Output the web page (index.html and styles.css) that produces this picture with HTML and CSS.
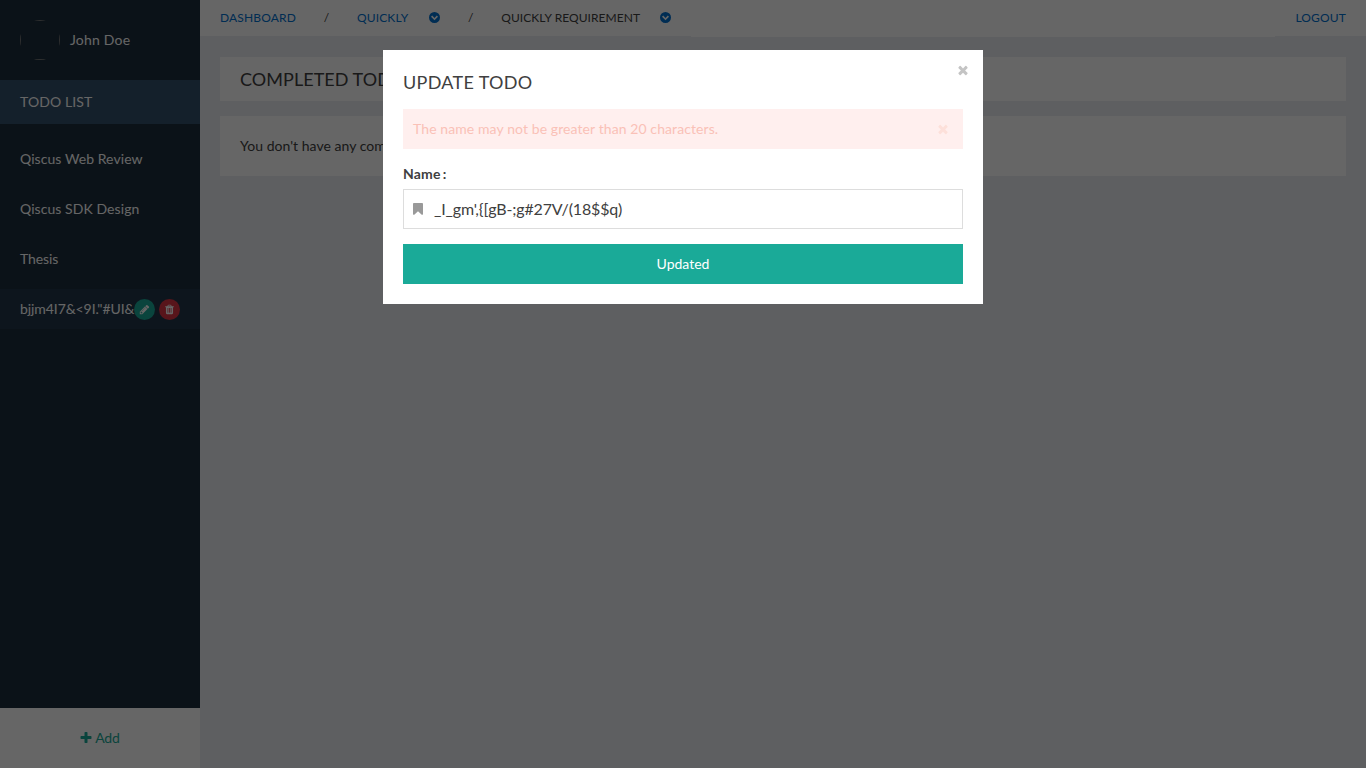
FILE: index.html
```html
<!DOCTYPE html>
<html lang="en">
<head>
<meta charset="utf-8">
<title>Todo</title>
<link rel="stylesheet" href="styles.css">
</head>
<body>
<svg class="sprite" aria-hidden="true">
  <symbol id="times" viewBox="0 0 1792 1792"><path d="M1490 1322q0 40-28 68l-136 136q-28 28-68 28t-68-28l-294-294-294 294q-28 28-68 28t-68-28l-136-136q-28-28-28-68t28-68l294-294-294-294q-28-28-28-68t28-68l136-136q28-28 68-28t68 28l294 294 294-294q28-28 68-28t68 28l136 136q28 28 28 68t-28 68l-294 294 294 294q28 28 28 68z"/></symbol>
  <symbol id="plus" viewBox="0 0 1792 1792"><path d="M1600 736v192q0 40-28 68t-68 28h-416v416q0 40-28 68t-68 28h-192q-40 0-68-28t-28-68v-416h-416q-40 0-68-28t-28-68v-192q0-40 28-68t68-28h416v-416q0-40 28-68t68-28h192q40 0 68 28t28 68v416h416q40 0 68 28t28 68z"/></symbol>
  <symbol id="bookmark" viewBox="0 0 1792 1792"><path d="M1420 128q23 0 44 9 33 13 52.500 41t19.500 62v1289q0 34-19.500 62t-52.500 41q-19 8-44 8-48 0-83-32l-441-424-441 424q-36 33-83 33-23 0-44-9-33-13-52.500-41t-19.500-62v-1289q0-34 19.500-62t52.500-41q21-9 44-9h1048z"/></symbol>
  <symbol id="pencil" viewBox="0 0 1792 1792"><path d="M491 1536l91-91-235-235-91 91v107h128v128h107zm523-928q0-22-22-22-10 0-17 7l-542 542q-7 7-7 17 0 22 22 22 10 0 17-7l542-542q7-7 7-17zm-54-192l416 416-832 832h-416v-416zm683 96q0 53-37 90l-166 166-416-416 166-165q36-38 90-38 53 0 91 38l235 234q37 39 37 91z"/></symbol>
  <symbol id="trash" viewBox="0 0 1792 1792"><path d="M704 1376v-704q0-14-9-23t-23-9h-64q-14 0-23 9t-9 23v704q0 14 9 23t23 9h64q14 0 23-9t9-23zm256 0v-704q0-14-9-23t-23-9h-64q-14 0-23 9t-9 23v704q0 14 9 23t23 9h64q14 0 23-9t9-23zm256 0v-704q0-14-9-23t-23-9h-64q-14 0-23 9t-9 23v704q0 14 9 23t23 9h64q14 0 23-9t9-23zm-544-992h448l-48-117q-7-9-17-11h-317q-10 2-17 11zm928 32v64q0 14-9 23t-23 9h-96v948q0 83-47 143.500t-113 60.500h-832q-66 0-113-58.500t-47-141.500v-952h-96q-14 0-23-9t-9-23v-64q0-14 9-23t23-9h309l70-167q15-37 54-63t79-26h320q40 0 79 26t54 63l70 167h309q14 0 23 9t9 23z"/></symbol>
  <symbol id="chevron" viewBox="0 0 11 11"><path fill-rule="evenodd" d="M5.500 0a5.500 5.500 0 1 0 0 11a5.500 5.500 0 1 0 0-11zM5.500 8.300L2 4.800L3.200 3.600L5.500 5.900L7.800 3.600L9 4.800z"/></symbol>
</svg>
<div class="app">
  <aside class="sidebar">
    <div class="user"><span class="avatar"></span><span class="username">John Doe</span></div>
    <div class="section">TODO LIST</div>
    <nav class="todos">
      <a class="todo">Qiscus Web Review</a>
      <a class="todo">Qiscus SDK Design</a>
      <a class="todo short">Thesis</a>
      <div class="todo active">
        <span class="name">bjjm4I7&amp;&lt;9I."#UI&amp;</span>
        <span class="round edit"><svg><use href="#pencil"/></svg></span>
        <span class="round delete"><svg><use href="#trash"/></svg></span>
      </div>
    </nav>
    <a class="add"><svg class="icon"><use href="#plus"/></svg><span>Add</span></a>
  </aside>
  <div class="content">
    <header class="topbar">
      <a class="crumb link">DASHBOARD</a>
      <span class="slash">/</span>
      <a class="crumb link">QUICKLY</a>
      <svg class="chev"><use href="#chevron"/></svg>
      <span class="slash">/</span>
      <span class="crumb current">QUICKLY REQUIREMENT</span>
      <svg class="chev"><use href="#chevron"/></svg>
      <span class="filler"></span>
      <a class="crumb link">LOGOUT</a>
    </header>
    <main class="panels">
      <h1 class="panel heading">COMPLETED TODO</h1>
      <p class="panel message">You don't have any completed todo</p>
    </main>
  </div>
</div>
<div class="overlay">
  <section class="modal">
    <svg class="icon close"><use href="#times"/></svg>
    <h2 class="title">UPDATE TODO</h2>
    <div class="alert"><span>The name may not be greater than 20 characters.</span><svg class="icon"><use href="#times"/></svg></div>
    <div class="label">Name<span class="colon">:</span></div>
    <div class="field"><svg class="icon"><use href="#bookmark"/></svg><span>_I_gm',{[gB-;g#27V/(18$$q)</span></div>
    <div class="button">Updated</div>
  </section>
</div>
</body>
</html>
```
FILE: styles.css
```css
* { box-sizing: border-box; }
body { margin: 0; font: 14px/20px Lato, "Open Sans", sans-serif; color: #404040; overflow: hidden; }
h1, h2, p { margin: 0; font-weight: 400; }
.sprite { position: absolute; width: 0; height: 0; }
svg { fill: currentColor; flex: none; display: block; }
.icon { width: 14px; height: 14px; }
.app { display: flex; height: 100vh; background: #ebeef2; }
.sidebar { width: 200px; display: flex; flex-direction: column; background: #1c2d3c; color: #fff; }
.user { height: 80px; padding: 0 20px; display: flex; align-items: center; gap: 10px; }
.username { letter-spacing: .2px; }
.avatar { width: 40px; height: 40px; border-radius: 50%;
  background:
    linear-gradient(#777, #777) 50% 0 / 12px 1px no-repeat,
    linear-gradient(#777, #777) 50% 100% / 12px 1px no-repeat,
    linear-gradient(#777, #777) 0 50% / 1px 12px no-repeat,
    linear-gradient(#777, #777) 100% 50% / 1px 12px no-repeat; }
.section { height: 44px; padding: 12px 20px; background: #34506b; letter-spacing: .1px; }
.todos { flex: 1; padding-top: 15px; display: flex; flex-direction: column; gap: 10px; }
.todo { height: 40px; padding: 0 20px; display: flex; align-items: center; letter-spacing: .07px; }
.short { letter-spacing: -.1px; }
.active { background: #22364a; letter-spacing: -.08px; }
.name { width: 114px; white-space: nowrap; }
.round { width: 21px; height: 21px; border-radius: 50%; display: flex; align-items: center; justify-content: center; flex: none; }
.round svg { width: 11px; height: 11px; }
.edit { background: #1aaa98; margin-right: 4px; }
.delete { background: #dc3545; }
.add { height: 60px; background: #fff; color: #1aaa98; display: flex; align-items: center; justify-content: center; gap: 2px; padding-right: 1px; letter-spacing: -.1px; }
.content { flex: 1; min-width: 0; }
.topbar { height: 36px; background: #fff; display: flex; font-size: 12px; line-height: 36px; padding: 0 20px; }
.link, .chev { color: #0070d0; }
.crumb { letter-spacing: .15px; }
.current { letter-spacing: .06px; }
.slash { width: 61px; text-align: center; }
.chev { width: 11px; height: 11px; margin: 12px 0 0 21px; }
.current + .chev { margin-left: 20px; }
.filler { flex: 1; height: 37px; margin: 0 20px; background: #fff; }
.panels { padding: 21px 20px; display: flex; flex-direction: column; gap: 15px; }
.panel { background: #fff; padding: 20px; }
.heading { height: 44px; padding-block: 12px; font-size: 18px; letter-spacing: .05px; }
.message { height: 60px; letter-spacing: .03px; }
.overlay { position: absolute; inset: 0; background: rgba(0, 0, 0, .6); padding-top: 50px; }
.modal { position: relative; width: 600px; height: 254px; margin: 0 auto; padding: 20px; background: #fff; }
.title { font-size: 18px; line-height: 24px; margin-bottom: 15px; letter-spacing: .32px; }
.close { position: absolute; right: 13.500px; top: 13px; color: #c4c4c4; }
.alert { height: 40px; padding: 0 13.500px 0 10px; display: flex; align-items: center; justify-content: space-between; background: #ffefee; color: #fac1b7; letter-spacing: .09px; }
.alert svg { color: #fde0da; }
.label { margin: 15px 0 5px; font-weight: 700; letter-spacing: .2px; }
.colon { margin-left: 2px; }
.field { height: 40px; border: 1px solid #ddd; padding: 0 7px; display: flex; align-items: center; gap: 9px; font-size: 16px; letter-spacing: -.14px; }
.field svg { color: #999; }
.button { height: 40px; margin-top: 15px; line-height: 40px; text-align: center; background: #1aaa98; color: #fff; }
```
